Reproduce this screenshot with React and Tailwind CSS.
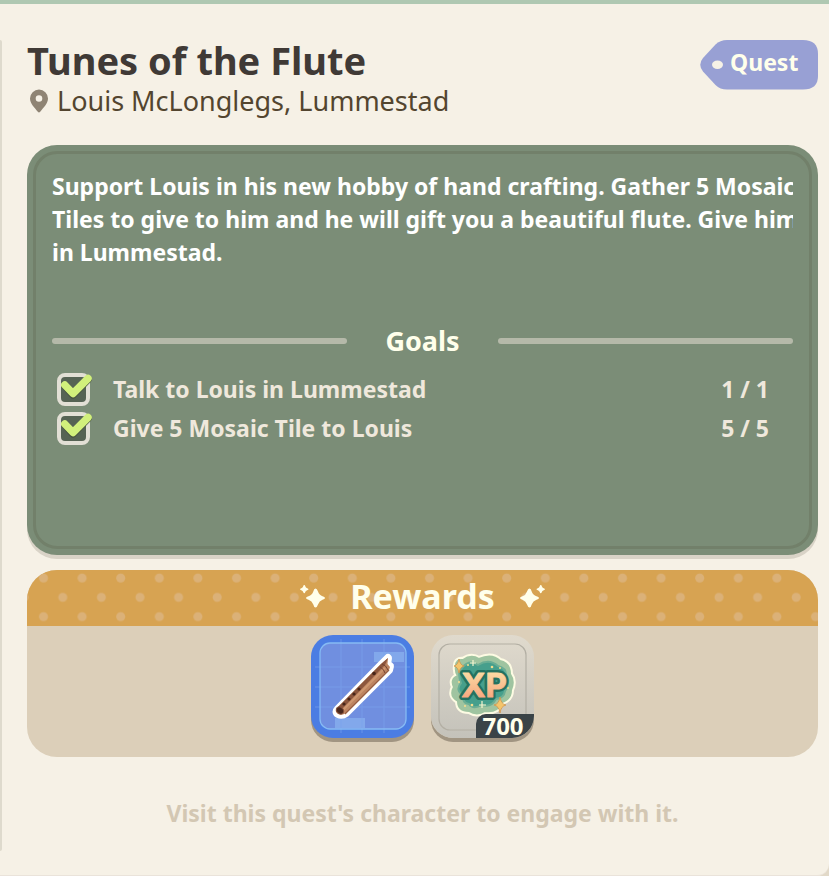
const description = [
    'Support Louis in his new hobby of hand crafting. Gather 5 Mosaic',
    'Tiles to give to him and he will gift you a beautiful flute. Give him',
    'in Lummestad.',
];

const goals = [
    { id: 'talk', label: 'Talk to Louis in Lummestad', done: 1, total: 1 },
    { id: 'tiles', label: 'Give 5 Mosaic Tile to Louis', done: 5, total: 5 },
];

const PinIcon = () => (
    <svg viewBox="0 0 18 24" className="w-[18px] h-6 shrink-0" aria-hidden="true">
        <path
            fill="#8f8474"
            fillRule="evenodd"
            d="M9 0.500a9 9 0 0 1 9 9c0 5-4.500 9-7.800 13.300a1.500 1.500 0 0 1-2.400 0C4.500 18.500 0 14.500 0 9.500a9 9 0 0 1 9-9ZM9 6.200a3.300 3.300 0 1 0 0 6.600 3.300 3.300 0 0 0 0-6.600Z"
        />
    </svg>
);

const QuestTag = () => (
    <div className="relative shrink-0 mt-[5px] w-[118px] h-[50px] pl-[30px]">
        <svg viewBox="0 0 118 50" className="absolute inset-0 w-full h-full" aria-hidden="true">
            <path
                fill="#98a0d4"
                d="M27 0H103Q118 0 118 14V36Q118 49.500 103 49.500H27Q20 49.500 15.500 45L3 31.500Q-2.500 24.700 3 18L15.500 4.500Q20 0 27 0Z"
            />
            <ellipse cx="17.500" cy="24.700" rx="5.500" ry="4.200" fill="#f6f1e6" />
        </svg>
        <span className="relative block text-[23px] leading-[44px] font-bold text-[#ffffeb]">Quest</span>
    </div>
);

// Big four-point star with a small one beside it
const Sparkles = ({ flip }) => (
    <svg viewBox="0 0 26 24" className={flip ? 'w-[26px] h-6 -scale-x-100' : 'w-[26px] h-6'} aria-hidden="true">
        <g fill="#ffffeb">
            <path d="M15.500 4.500Q17 4.500 18 7.500Q19.300 11.300 22.500 12.300Q25 13 25 14Q25 15 22.500 15.800Q19.300 17 18 20.500Q17 23.500 15.500 23.500Q14 23.500 13.300 20.500Q12 17 8.500 15.800Q6 15 6 14Q6 13 8.500 12.300Q12 11.300 13.300 7.500Q14 4.500 15.500 4.500Z" />
            <path d="M4.200 1Q5 1 5.300 2.300Q5.700 3.800 7.200 4.200Q8.500 4.500 8.500 5.200Q8.500 5.800 7.200 6.200Q5.700 6.600 5.300 8Q5 9.300 4.200 9.300Q3.500 9.300 3.200 8Q2.800 6.600 1.300 6.200Q0 5.800 0 5.200Q0 4.500 1.300 4.200Q2.800 3.800 3.200 2.300Q3.500 1 4.200 1Z" />
        </g>
    </svg>
);

const Dots = () => (
    <svg className="absolute inset-0 w-full h-full" aria-hidden="true">
        <defs>
            <pattern id="dots" width="38.600" height="38.600" patternUnits="userSpaceOnUse" x="-3" y="-11">
                <circle cx="19.500" cy="19" r="4.500" fill="#dbb178" />
                <circle cx="0.200" cy="38.300" r="4.500" fill="#dbb178" />
                <circle cx="38.800" cy="38.300" r="4.500" fill="#dbb178" />
                <circle cx="0.200" cy="-0.300" r="4.500" fill="#dbb178" />
                <circle cx="38.800" cy="-0.300" r="4.500" fill="#dbb178" />
            </pattern>
        </defs>
        <rect width="100%" height="100%" fill="url(#dots)" />
    </svg>
);

const Goal = ({ goal }) => (
    <li className="flex items-center h-[39px] pl-[5px] pr-6 text-[23px] font-bold text-[#efe8dc]">
        <div className="relative w-[33px] h-[33px] mr-[23px] shrink-0">
            <input
                id={goal.id}
                type="checkbox"
                defaultChecked={goal.done === goal.total}
                className="peer appearance-none block w-full h-full rounded-lg border-4 border-[#e2dfd5] bg-[#566354]"
            />
            <svg
                viewBox="0 0 36 33"
                className="absolute top-0 left-0 w-9 h-[33px] overflow-visible pointer-events-none hidden peer-checked:block"
                aria-hidden="true"
            >
                <path d="M8.500 13.500L16 22L31 6.500" fill="none" stroke="#47543f" strokeWidth="7.500" strokeLinecap="round" strokeLinejoin="round" />
                <path d="M7.800 12L16 20.500L31 5.500" fill="none" stroke="#d2f07c" strokeWidth="7.500" strokeLinecap="round" strokeLinejoin="round" />
            </svg>
        </div>
        <label htmlFor={goal.id} className="flex-1">{goal.label}</label>
        <span>{goal.done} / {goal.total}</span>
    </li>
);

const FluteReward = () => (
    <div className="w-[103px] h-[103px] rounded-[22px] bg-[#4c7de3] shadow-[0_4px_0_#a19582] overflow-hidden">
        <svg viewBox="0 0 103 103" className="w-full h-full" role="img" aria-label="Flute">
            <rect x="9" y="8" width="86" height="86" rx="10" fill="#7190e0" />
            <rect x="63" y="17" width="30" height="10" fill="#82a8ec" />
            <rect x="24" y="83" width="30" height="10" fill="#82a8ec" />
            <path d="M30 4V98M51 4V98M73 4V98M4 32H99M4 52H99M4 72H99" stroke="#7ba2ed" strokeWidth="1" opacity="0.6" />
            <rect x="9" y="8" width="86" height="86" rx="10" fill="none" stroke="#86bbf4" strokeWidth="1.300" />
            <path d="M27 74L70 30L77 23L76 29L79 31L78 35L35 78Q31 81 27 79Q24 77 27 74Z" fill="#fff" stroke="#fff" strokeWidth="8" strokeLinejoin="round" />
            <path d="M26 73L70 29L77 23L76.500 29L79 32L78 35L35 78Q31 81 27 79Q23 76 26 73Z" fill="#bd8460" />
            <path d="M26 73L70 29L77 23L74 30L30 75Z" fill="#8c563d" />
            <path d="M31 76L74 33" stroke="#cf9770" strokeWidth="2" />
            <path d="M34 79L78 35" stroke="#965d42" strokeWidth="1.300" />
            <path d="M71 29Q75 30 77 35M69 32Q73 34 74 38" fill="none" stroke="#76432f" strokeWidth="1" />
            <ellipse cx="29" cy="75.500" rx="4" ry="3.200" transform="rotate(40 29 75.500)" fill="#4a281d" stroke="#8c563d" strokeWidth="1" />
            <g fill="#472519">
                <circle cx="33" cy="69" r="1.600" />
                <circle cx="38" cy="64" r="1.600" />
                <circle cx="43" cy="59" r="1.600" />
                <circle cx="48" cy="54" r="1.600" />
                <circle cx="63" cy="38.500" r="1.800" />
            </g>
        </svg>
    </div>
);

const XpReward = () => (
    <div className="relative w-[103px] h-[103px] rounded-[22px] bg-linear-to-b from-[#e0dacd] to-[#c4c2ba] shadow-[0_4px_0_#a19582]">
        <svg viewBox="0 0 103 103" className="w-full h-full" role="img" aria-label="Experience">
            <defs>
                <linearGradient id="xp" x1="0" y1="0" x2="0" y2="1">
                    <stop offset="0.200" stopColor="#fbd9a2" />
                    <stop offset="0.900" stopColor="#f7a27c" />
                </linearGradient>
                <path
                    id="cloud"
                    d="M25 31Q25 24 32 25Q40 19 48 24Q61 18 69 26Q79 28 79 39Q84 46 80 55Q80 64 71 67Q66 78 54 76Q46 81 38 76Q27 76 27 66Q18 61 23 52Q19 44 27 41Q24 37 25 31Z"
                />
            </defs>
            <rect x="8" y="9" width="87" height="86" rx="11" fill="none" stroke="#b3afa4" strokeWidth="1.200" />
            <use href="#cloud" fill="#fdfbe3" stroke="#fdfbe3" strokeWidth="6" strokeLinejoin="round" />
            <use href="#cloud" fill="#9fc4a0" stroke="#9fc4a0" strokeWidth="2" />
            <path d="M31 33Q38 24 47 30Q58 23 67 31Q76 33 75 42Q79 50 74 56Q73 63 65 64Q60 73 51 70Q42 75 38 69Q31 68 32 60Q24 55 30 48Q26 38 31 33Z" fill="#469f8c" stroke="#6bae94" strokeWidth="2" />
            <g fill="#f5dc8e">
                <circle cx="61" cy="32" r="1.300" />
                <circle cx="69" cy="33" r="1" />
                <circle cx="37" cy="30" r="1" />
                <circle cx="34" cy="71" r="1.100" />
                <circle cx="41" cy="70" r="1.300" />
                <circle cx="28" cy="47" r="1" />
                <circle cx="77" cy="53" r="1" />
            </g>
            <path d="M42 25V31M39 28H45M51 66V73M48 70H55" stroke="#f7f6cf" strokeWidth="1.200" />
            <text x="53" y="62" textAnchor="middle" fontSize="33" fontWeight="700" fontFamily="Inter" fill="#247260" stroke="#247260" strokeWidth="6" strokeLinejoin="round">XP</text>
            <text x="53" y="62" textAnchor="middle" fontSize="33" fontWeight="700" fontFamily="Inter" fill="url(#xp)" stroke="url(#xp)" strokeWidth="1" strokeLinejoin="round">XP</text>
            <g fill="#f3c56c" stroke="#d1944d" strokeWidth="0.800">
                <path d="M28 24Q29 30 33 31Q29 32 28 38Q27 32 23 31Q27 30 28 24Z" />
                <path d="M69 62Q70 69 75 70Q70 71 69 78Q68 71 63 70Q68 69 69 62Z" />
            </g>
        </svg>
        <span className="absolute right-0 bottom-0 w-[58px] h-6 pr-1 rounded-tl-[10px] rounded-br-[22px] bg-[#3a4347] text-center text-2xl leading-6 font-bold text-[#ffffeb]">
            700
        </span>
    </div>
);

const QuestDetails = () => (
    <main className="flex-1 min-w-0 pl-[25px] pr-[11px] pt-[31px]">
        <header className="flex items-start justify-between">
            <div>
                <h1 className="text-[38px] leading-[50px] font-bold text-[#403a36]">Tunes of the Flute</h1>
                <p className="flex items-center gap-[9px] pl-[3px] text-[27px] leading-8 text-[#53452f]">
                    <PinIcon />
                    Louis McLonglegs, Lummestad
                </p>
            </div>
            <QuestTag />
        </header>

        <section className="mt-7 p-1.5 flex min-h-[410px] rounded-[30px] bg-[#7b8d77] shadow-[0_4px_0_#d9d3c7]">
            <div className="flex-1 min-w-0 px-4 py-4 rounded-[24px] border-[3px] border-[#72806a]">
                <p className="overflow-hidden whitespace-nowrap text-[23px] leading-[33px] font-bold text-white">
                    {description.map((line) => (
                        <span key={line} className="block">{line}</span>
                    ))}
                </p>

                <div className="flex items-center gap-[38px] mt-[55px]">
                    <span className="flex-1 h-1.5 rounded-full bg-[#b5b9a9]" />
                    <h2 className="text-[27px] leading-[34px] font-bold text-[#ffffeb]">Goals</h2>
                    <span className="flex-1 h-1.5 rounded-full bg-[#b5b9a9]" />
                </div>

                <ul className="mt-3">
                    {goals.map((goal) => (
                        <Goal key={goal.id} goal={goal} />
                    ))}
                </ul>
            </div>
        </section>

        <section className="mt-[15px] rounded-[30px] overflow-hidden bg-[#dccfb9]">
            <div className="relative h-14 bg-[#d7a352]">
                <Dots />
                <div className="relative flex items-center justify-center gap-6 h-full pb-1">
                    <Sparkles />
                    <h2 className="text-[34px] leading-[46px] font-bold text-[#ffffeb]">Rewards</h2>
                    <Sparkles flip />
                </div>
            </div>
            <div className="flex justify-center gap-[17px] pt-[9px] pb-[19px]">
                <FluteReward />
                <XpReward />
            </div>
        </section>

        <p className="mt-[39px] text-center text-[23px] leading-[34px] font-bold text-[#d3c7b3]">
            Visit this quest's character to engage with it.
        </p>
    </main>
);

export default function App() {
    return (
        <div className="min-h-screen flex bg-[#e2d9c8] font-['Noto_Sans',sans-serif]">
            <div className="flex-1 min-w-0 flex border-t-4 border-t-[#afc8b2] border-b border-b-[#eae3da] rounded-br-xl bg-[#f6f1e6]">
                <div className="w-0.5 mt-9 mb-6 rounded-r-full bg-[#dedacd]" />
                <QuestDetails />
            </div>
        </div>
    );
}
